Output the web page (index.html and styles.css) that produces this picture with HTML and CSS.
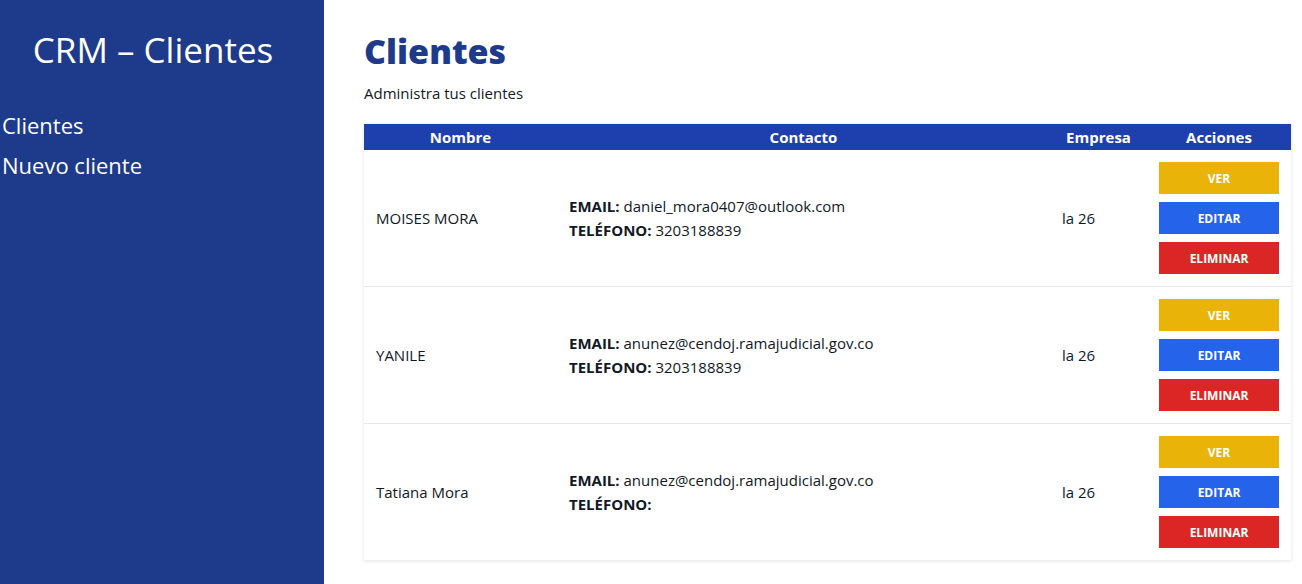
FILE: index.html
```html
<!DOCTYPE html>
<html lang="es">
<head>
<meta charset="utf-8">
<title>CRM – Clientes</title>
<link rel="stylesheet" href="styles.css">
</head>
<body>
<div class="layout">
  <aside class="sidebar">
    <h2 class="brand">CRM – Clientes</h2>
    <nav class="nav">
      <a href="#">Clientes</a>
      <a href="#">Nuevo cliente</a>
    </nav>
  </aside>
  <main class="main">
    <h1 class="title">Clientes</h1>
    <p class="subtitle">Administra tus clientes</p>
    <table class="table">
      <colgroup>
        <col class="c-name"><col class="c-contact"><col class="c-company"><col class="c-actions">
      </colgroup>
      <thead>
        <tr><th>Nombre</th><th>Contacto</th><th>Empresa</th><th>Acciones</th></tr>
      </thead>
      <tbody>
        <tr>
          <td>MOISES MORA</td>
          <td><div><b>EMAIL:</b> daniel_mora0407@outlook.com</div><div><b>TELÉFONO:</b> 3203188839</div></td>
          <td>la 26</td>
          <td><div class="actions"><button class="btn ver">VER</button><button class="btn editar">EDITAR</button><button class="btn eliminar">ELIMINAR</button></div></td>
        </tr>
        <tr>
          <td>YANILE</td>
          <td><div><b>EMAIL:</b> anunez@cendoj.ramajudicial.gov.co</div><div><b>TELÉFONO:</b> 3203188839</div></td>
          <td>la 26</td>
          <td><div class="actions"><button class="btn ver">VER</button><button class="btn editar">EDITAR</button><button class="btn eliminar">ELIMINAR</button></div></td>
        </tr>
        <tr>
          <td>Tatiana Mora</td>
          <td><div><b>EMAIL:</b> anunez@cendoj.ramajudicial.gov.co</div><div><b>TELÉFONO:</b> </div></td>
          <td>la 26</td>
          <td><div class="actions"><button class="btn ver">VER</button><button class="btn editar">EDITAR</button><button class="btn eliminar">ELIMINAR</button></div></td>
        </tr>
      </tbody>
    </table>
  </main>
</div>
</body>
</html>
```
FILE: styles.css
```css
* { box-sizing: border-box; }
html, body { margin: 0; padding: 0; }
body {
  font-family: "Open Sans", "Noto Sans", sans-serif;
  color: #111827;
  background: #fff;
}
.layout {
  display: flex;
  min-height: 584px;
}
.sidebar {
  width: 324px;
  flex: none;
  background: #1e3a8a;
  color: #fff;
}
.brand {
  margin: 26px 0 0 0;
  padding-right: 18px;
  text-align: center;
  font-size: 35px;
  font-weight: 400;
  line-height: 48px;
}
.nav {
  display: flex;
  flex-direction: column;
  margin-top: 37px;
  padding-left: 2px;
  gap: 12px;
}
.nav a {
  color: #fff;
  text-decoration: none;
  font-size: 22px;
  line-height: 28px;
}
.main {
  flex: 1;
  padding: 30px 11px 0 40px;
}
.title {
  margin: 0;
  font-size: 34px;
  font-weight: 800;
  color: #1e3a8a;
  line-height: 42px;
}
.subtitle {
  margin: 10px 0 20px;
  font-size: 15px;
  line-height: 22px;
}
.table {
  width: 927px;
  border-collapse: collapse;
  table-layout: fixed;
  box-shadow: 0 1px 4px rgba(0,0,0,0.12);
  font-size: 15px;
}
.c-name { width: 193px; }
.c-contact { width: 493px; }
.c-company { width: 97px; }
.c-actions { width: 144px; }
.table th {
  background: #1e40af;
  color: #fff;
  font-weight: 700;
  height: 26px;
  padding: 0;
  line-height: 26px;
  text-align: center;
}
.table td {
  padding: 12px;
  vertical-align: middle;
  line-height: 24px;
}
.table tbody tr + tr td { border-top: 1px solid #e5e7eb; }
.actions {
  display: flex;
  flex-direction: column;
  gap: 8px;
}
.btn {
  width: 120px;
  height: 32px;
  border: 0;
  color: #fff;
  font-family: inherit;
  font-weight: 700;
  font-size: 12px;
  padding: 0;
}
.ver { background: #eab308; }
.editar { background: #2563eb; }
.eliminar { background: #dc2626; }
```
